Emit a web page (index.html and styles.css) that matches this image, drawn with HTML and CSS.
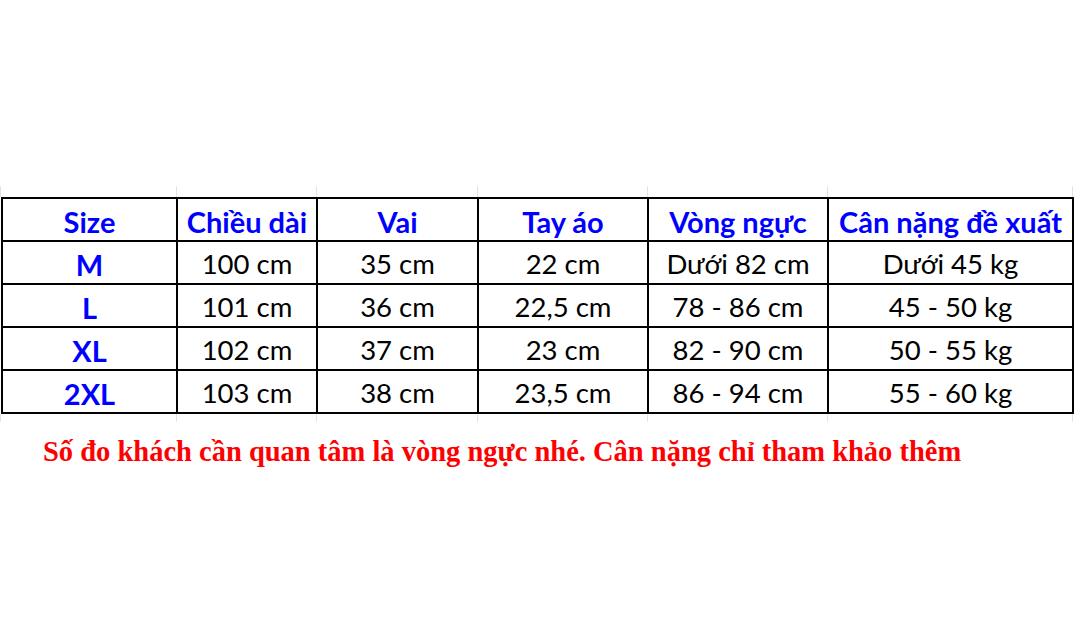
FILE: index.html
```html
<!DOCTYPE html>
<html lang="vi">
<head>
<meta charset="utf-8">
<title>Bảng size</title>
<link rel="stylesheet" href="styles.css">
</head>
<body>
<div class="page">
  <div class="stubs stubs-top">
    <span class="stub w1"></span><span class="stub w2"></span><span class="stub w3"></span><span class="stub w4"></span><span class="stub w5"></span><span class="stub w6"></span>
  </div>
  <table class="size-table">
    <colgroup>
      <col class="c1"><col class="c2"><col class="c3"><col class="c4"><col class="c5"><col class="c6">
    </colgroup>
    <thead>
      <tr>
        <th>Size</th><th>Chiều dài</th><th>Vai</th><th>Tay áo</th><th>Vòng ngực</th><th>Cân nặng đề xuất</th>
      </tr>
    </thead>
    <tbody>
      <tr><th>M</th><td>100 cm</td><td>35 cm</td><td>22 cm</td><td>Dưới 82 cm</td><td>Dưới 45 kg</td></tr>
      <tr><th>L</th><td>101 cm</td><td>36 cm</td><td>22,5 cm</td><td>78 - 86 cm</td><td>45 - 50 kg</td></tr>
      <tr><th>XL</th><td>102 cm</td><td>37 cm</td><td>23 cm</td><td>82 - 90 cm</td><td>50 - 55 kg</td></tr>
      <tr><th>2XL</th><td>103 cm</td><td>38 cm</td><td>23,5 cm</td><td>86 - 94 cm</td><td>55 - 60 kg</td></tr>
    </tbody>
  </table>
  <div class="stubs stubs-bottom">
    <span class="stub w1"></span><span class="stub w2"></span><span class="stub w3"></span><span class="stub w4"></span><span class="stub w5"></span><span class="stub w6"></span>
  </div>
  <p class="note">Số đo khách cần quan tâm là vòng ngực nhé. Cân nặng chỉ tham khảo thêm</p>
</div>
</body>
</html>
```

FILE: styles.css
```css
html, body {
  margin: 0;
  padding: 0;
  background: #ffffff;
}

.page {
  width: 1083px;
  height: 623px;
  padding-top: 186px;
  box-sizing: border-box;
}

.stubs {
  display: flex;
  height: 11px;
}

.stubs-bottom {
  height: 8px;
}

.stub {
  display: block;
  border-left: 1px solid #dfe3ea;
  box-sizing: border-box;
}

.w1 { width: 176px; }
.w2 { width: 140px; }
.w3 { width: 161px; }
.w4 { width: 170px; }
.w5 { width: 180px; }
.w6 { width: 246px; border-right: 1px solid #dfe3ea; }

.size-table {
  border-collapse: collapse;
  table-layout: fixed;
  width: 1071px;
  margin-left: 1px;
  font-family: Lato, "Noto Sans", sans-serif;
  font-size: 27.5px;
}

.c1 { width: 175px; }
.c2 { width: 140px; }
.c3 { width: 161px; }
.c4 { width: 170px; }
.c5 { width: 180px; }
.c6 { width: 245px; }

.size-table th,
.size-table td {
  border: 2px solid #000000;
  height: 38px;
  padding: 3px 0 0;
  text-align: center;
  vertical-align: middle;
  line-height: 1;
  white-space: nowrap;
}

.size-table th {
  color: #0000ff;
  font-weight: 700;
  font-size: 29px;
}

.size-table td {
  color: #000000;
  font-weight: 400;
}

.note {
  margin: 16px 0 0 43px;
  font-family: "Liberation Serif", "Times New Roman", serif;
  font-weight: 700;
  font-size: 28.5px;
  color: #ff0000;
  line-height: 1;
  white-space: nowrap;
}
```
